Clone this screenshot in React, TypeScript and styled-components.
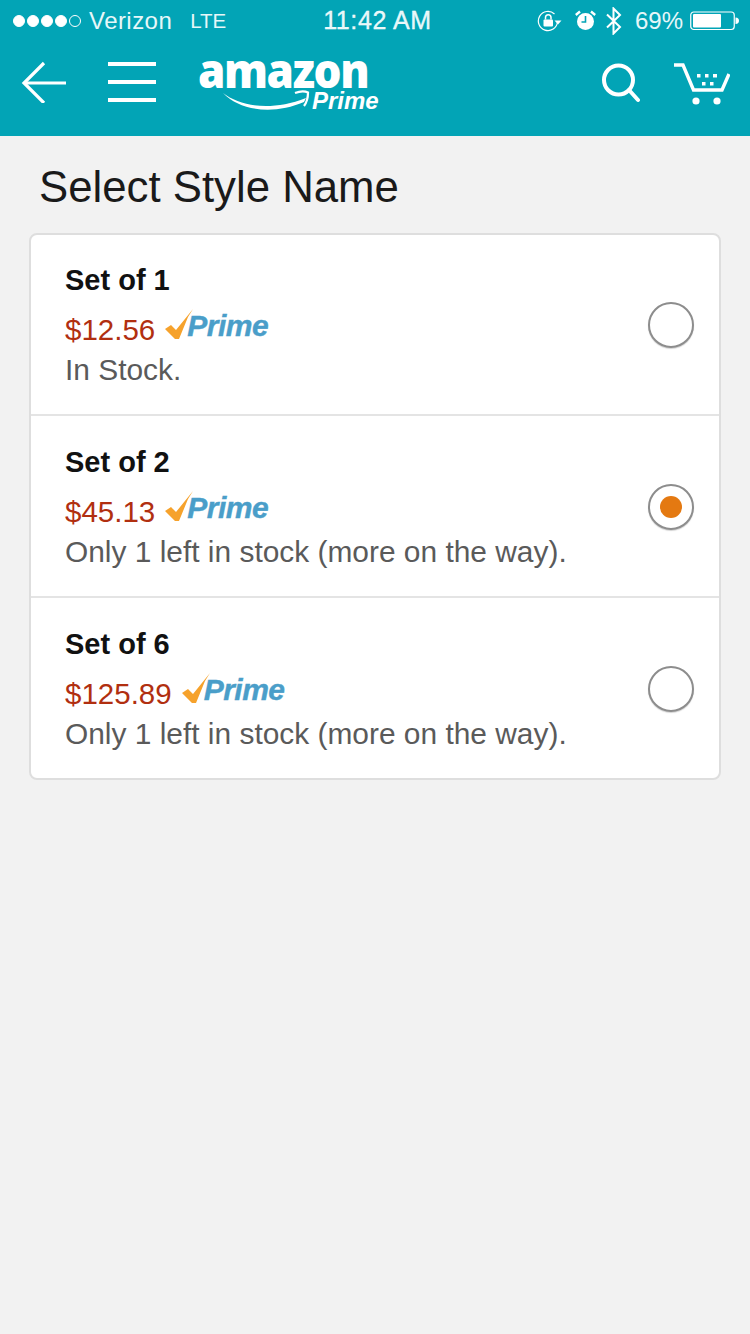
import React from "react";
import styled, { createGlobalStyle } from "styled-components";

const Global = createGlobalStyle`
  html, body { margin: 0; padding: 0; background: #f2f2f2; }
  * { box-sizing: border-box; }
  body { font-family: "Liberation Sans", Arial, sans-serif; }
`;

const Page = styled.div`
  width: 750px;
  height: 1334px;
  background: #f2f2f2;
  overflow: hidden;
`;

const Header = styled.header`
  height: 136px;
  background: #02a4b6;
  color: #fff;
  display: flex;
  flex-direction: column;
`;

const StatusBar = styled.div`
  height: 41px;
  display: grid;
  grid-template-columns: 1fr auto 1fr;
  align-items: center;
  padding: 0 11px 0 13px;
  font-size: 24px;
  color: #e6f7f9;
`;

const StatusLeft = styled.div`
  display: flex;
  align-items: center;
`;

const Dot = styled.span<{ $on: boolean }>`
  width: 12px;
  height: 12px;
  border-radius: 50%;
  margin-right: 2px;
  border: 1.2px solid #fff;
  background: ${(p) => (p.$on ? "#fff" : "transparent")};
`;

const Carrier = styled.span`
  margin-left: 6px;
  letter-spacing: 0.45px;
`;

const Network = styled.span`
  margin-left: 18px;
  font-size: 20.5px;
`;

const Clock = styled.div`
  font-weight: 400;
  font-size: 25px;
  letter-spacing: 0.6px;
  margin-left: 3px;
  -webkit-text-stroke: 0.3px #fff;
`;

const StatusRight = styled.div`
  display: flex;
  align-items: center;
  justify-content: flex-end;
`;

const Percent = styled.span`
  margin-left: 13px;
  margin-right: 7px;
  font-size: 24px;
`;

const NavBar = styled.nav`
  flex: 1;
  display: flex;
  align-items: flex-start;
  padding: 18px 0 0 21px;
`;

const LogoBox = styled.div`
  position: relative;
  width: 184px;
  height: 64px;
  margin-left: 42px;
  margin-top: -6px;
`;

const LogoWord = styled.span`
  position: absolute;
  left: 0;
  top: 2px;
  font-family: "Open Sans", "Liberation Sans", sans-serif;
  font-size: 44px;
  font-weight: 800;
  letter-spacing: -1.4px;
  line-height: 32px;
  transform: scaleY(1.1);
  transform-origin: 0 100%;
`;

const LogoSub = styled.span`
  position: absolute;
  left: 114px;
  top: 40px;
  font-family: "Liberation Sans", sans-serif;
  font-size: 24px;
  font-style: italic;
  font-weight: 700;
  line-height: 16px;
`;

const LogoSmile = styled.svg`
  position: absolute;
  left: 0;
  top: 0;
`;

const NavRight = styled.div`
  margin-left: auto;
  display: flex;
  align-items: flex-start;
  gap: 34px;
  padding-right: 20px;
`;

const Main = styled.main`
  padding: 0 29px;
`;

const Title = styled.h1`
  margin: 0;
  padding: 25px 0 0 10px;
  height: 97px;
  font-size: 43.75px;
  line-height: 52px;
  font-weight: 400;
  color: #1a1a1a;
`;

const Card = styled.section`
  background: #fff;
  border: 2px solid #dedede;
  border-radius: 8px;
  overflow: hidden;
`;

const Row = styled.div`
  height: 182px;
  display: flex;
  align-items: flex-start;
  justify-content: space-between;
  padding: 28px 25px 0 34px;
  & + & {
    border-top: 2px solid #e4e4e4;
  }
  &:first-child {
    height: 179px;
    padding-top: 27px;
  }
`;

const Info = styled.div`
  display: flex;
  flex-direction: column;
`;

const Name = styled.div`
  font-size: 29px;
  font-weight: 700;
  line-height: 36px;
  color: #111;
`;

const PriceLine = styled.div`
  display: flex;
  align-items: center;
  height: 54px;
`;

const Price = styled.span`
  font-size: 29.5px;
  line-height: 46px;
  color: #b12f10;
  margin-top: 10px;
`;

const PrimeBadge = styled.span`
  position: relative;
  display: inline-block;
  width: 106px;
  height: 36px;
  margin-left: 10px;
  margin-top: 4px;
`;

const PrimeCheck = styled.svg`
  position: absolute;
  left: 0;
  top: 0;
`;

const PrimeWord = styled.span`
  position: absolute;
  left: 22px;
  top: 0;
  font-size: 30px;
  line-height: 34px;
  font-weight: 700;
  font-style: italic;
  letter-spacing: -0.5px;
  color: #4a9ec9;
  -webkit-text-stroke: 0.4px #4a9ec9;
`;

const Stock = styled.div`
  font-size: 29.9px;
  line-height: 36px;
  color: #5a5a5a;
`;

const Radio = styled.div<{ $checked?: boolean }>`
  width: 46px;
  height: 46px;
  margin-top: 40px;
  border-radius: 50%;
  border: 2px solid #8d8d8d;
  background: #fff;
  box-shadow: 0 1px 1px rgba(0, 0, 0, 0.18);
  display: flex;
  align-items: center;
  justify-content: center;
  flex: none;
  &::after {
    content: "";
    display: ${(p) => (p.$checked ? "block" : "none")};
    width: 22px;
    height: 22px;
    border-radius: 50%;
    background: #e47911;
  }
`;

const BackIcon = () => (
  <svg width="46" height="44" viewBox="0 0 46 44" fill="none" stroke="#fff" strokeWidth="3.2">
    <path d="M45 24 H4" />
    <path d="M23 4 L3 24 L23 44" />
  </svg>
);

const MenuIcon = styled.div`
  width: 48px;
  height: 40px;
  margin-left: 41px;
  margin-top: 3px;
  display: flex;
  flex-direction: column;
  justify-content: space-between;
  & > span {
    display: block;
    height: 4px;
    background: #fff;
  }
`;

const SearchIcon = () => (
  <svg width="40" height="44" viewBox="0 0 40 44" fill="none" stroke="#fff" strokeWidth="4">
    <circle cx="18.5" cy="21" r="14.5" />
    <path d="M29 31 L38 41" strokeLinecap="round" />
  </svg>
);

const CartIcon = () => (
  <svg width="56" height="46" viewBox="0 0 56 46" fill="none">
    <path d="M0 6 H9 L19.5 31 H48 L55 15" stroke="#fff" strokeWidth="3.4" />
    <g fill="#fff">
      <rect x="23" y="15" width="3.5" height="3.5" />
      <rect x="31" y="15" width="3.5" height="3.5" />
      <rect x="39" y="15" width="4" height="3.5" />
      <rect x="28" y="23" width="3.5" height="3.5" />
      <rect x="36" y="23" width="3.5" height="3.5" />
      <circle cx="22" cy="42" r="3.6" />
      <circle cx="43" cy="42" r="3.6" />
    </g>
  </svg>
);

const RotationLock = () => (
  <svg width="25" height="22" viewBox="0 0 25 22" fill="none">
    <path d="M20.5 12 A9.6 9.6 0 1 1 17.5 4" stroke="#fff" strokeWidth="1.2" />
    <path d="M17.5 10.5 H24.5 L21 14.5 Z" fill="#fff" />
    <rect x="6.5" y="9.5" width="9.5" height="7" rx="1" fill="#fff" />
    <path d="M8.5 9.5 V7.5 A2.7 2.7 0 0 1 14 7.5 V9.5" stroke="#fff" strokeWidth="1.5" />
  </svg>
);

const AlarmIcon = () => (
  <svg width="21" height="21" viewBox="0 0 21 21" style={{ marginLeft: 13 }}>
    <circle cx="10.5" cy="11.5" r="8.5" fill="#fff" />
    <path d="M10.5 6 V12 H6.5" stroke="#02a4b6" strokeWidth="1.6" fill="none" />
    <path d="M0.8 5 L5 1.5 M20.2 5 L16 1.5" stroke="#fff" strokeWidth="2.4" />
  </svg>
);

const BluetoothIcon = () => (
  <svg width="16" height="28" viewBox="0 0 16 28" fill="none" stroke="#fff" strokeWidth="2" style={{ marginLeft: 10 }}>
    <path d="M1 7.5 L14 20 L7.5 26.5 V1.5 L14 8 L1 20.5" />
  </svg>
);

const BatteryIcon = () => (
  <svg width="49" height="20" viewBox="0 0 49 20" fill="none">
    <rect x="0.75" y="1" width="43.5" height="17.5" rx="3" stroke="#fff" strokeWidth="1.2" />
    <rect x="3" y="3" width="28" height="13.5" rx="1" fill="#fff" />
    <path d="M45.5 6.5 C48 6.5 49 8 49 9.8 C49 11.5 48 13 45.5 13 Z" fill="#fff" />
  </svg>
);

const PrimeMark = () => (
  <PrimeBadge>
    <PrimeCheck width="28" height="32" viewBox="0 0 28 32">
      <path d="M0 20 L6 16 L11 21 L28 0 L23 8 L14 30 L10 30 Z" fill="#f6a22c" />
    </PrimeCheck>
    <PrimeWord>Prime</PrimeWord>
  </PrimeBadge>
);

const options = [
  { name: "Set of 1", price: "$12.56", stock: "In Stock.", checked: false },
  { name: "Set of 2", price: "$45.13", stock: "Only 1 left in stock (more on the way).", checked: true },
  { name: "Set of 6", price: "$125.89", stock: "Only 1 left in stock (more on the way).", checked: false },
];

export default function App() {
  return (
    <Page>
      <Global />
      <Header>
        <StatusBar>
          <StatusLeft>
            {[1, 1, 1, 1, 0].map((on, i) => (
              <Dot key={i} $on={!!on} />
            ))}
            <Carrier>Verizon</Carrier>
            <Network>LTE</Network>
          </StatusLeft>
          <Clock>11:42 AM</Clock>
          <StatusRight>
            <RotationLock />
            <AlarmIcon />
            <BluetoothIcon />
            <Percent>69%</Percent>
            <BatteryIcon />
          </StatusRight>
        </StatusBar>
        <NavBar>
          <BackIcon />
          <MenuIcon>
            <span />
            <span />
            <span />
          </MenuIcon>
          <LogoBox>
            <LogoWord>amazon</LogoWord>
            <LogoSmile width="184" height="64" viewBox="0 0 184 64" fill="none">
              <path d="M25 40 C42 53 72 59 108 45 L106 49 C76 62 42 58 25 40 Z" fill="#fff" />
              <path d="M97 40 C102 38 107 38 110 39.5 C110 44 109 49 106 53" stroke="#fff" strokeWidth="2.2" />
            </LogoSmile>
            <LogoSub>Prime</LogoSub>
          </LogoBox>
          <NavRight>
            <SearchIcon />
            <CartIcon />
          </NavRight>
        </NavBar>
      </Header>
      <Main>
        <Title>Select Style Name</Title>
        <Card>
          {options.map((o) => (
            <Row key={o.name}>
              <Info>
                <Name>{o.name}</Name>
                <PriceLine>
                  <Price>{o.price}</Price>
                  <PrimeMark />
                </PriceLine>
                <Stock>{o.stock}</Stock>
              </Info>
              <Radio $checked={o.checked} />
            </Row>
          ))}
        </Card>
      </Main>
    </Page>
  );
}
